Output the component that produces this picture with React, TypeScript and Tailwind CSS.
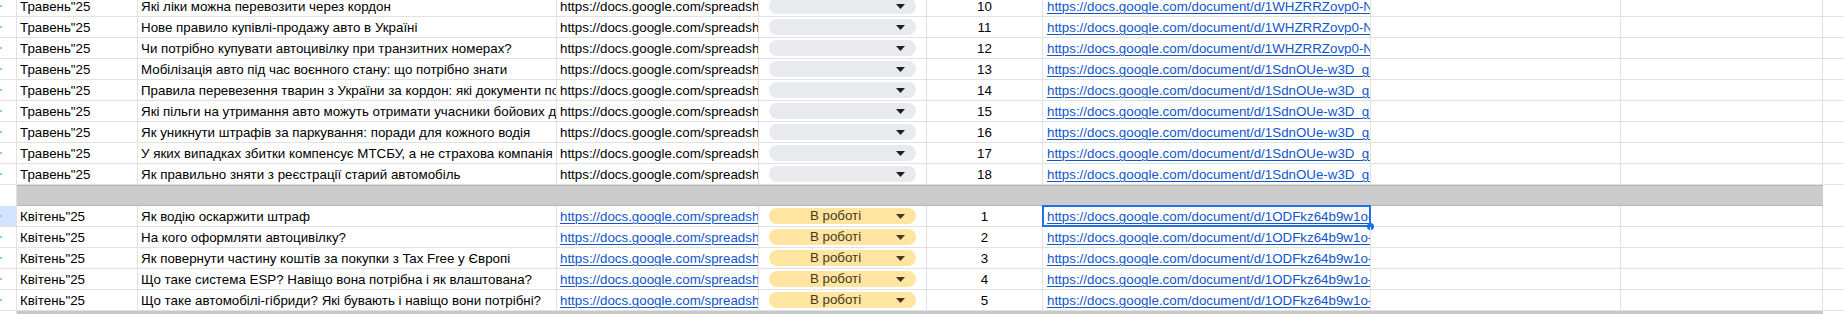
import React from 'react'

type Row = {
  month: string
  title: string
  num: number
  doc: string
  status?: string
}

const may: Row[] = [
  { month: 'Травень"25', title: 'Які ліки можна перевозити через кордон', num: 10, doc: '1WHZRRZovp0-NqK' },
  { month: 'Травень"25', title: 'Нове правило купівлі-продажу авто в Україні', num: 11, doc: '1WHZRRZovp0-NqK' },
  { month: 'Травень"25', title: 'Чи потрібно купувати автоцивілку при транзитних номерах?', num: 12, doc: '1WHZRRZovp0-NqK' },
  { month: 'Травень"25', title: 'Мобілізація авто під час воєнного стану: що потрібно знати', num: 13, doc: '1SdnOUe-w3D_g-Xq' },
  { month: 'Травень"25', title: 'Правила перевезення тварин з України за кордон: які документи потрібні', num: 14, doc: '1SdnOUe-w3D_g-Xq' },
  { month: 'Травень"25', title: 'Які пільги на утримання авто можуть отримати учасники бойових дій', num: 15, doc: '1SdnOUe-w3D_g-Xq' },
  { month: 'Травень"25', title: 'Як уникнути штрафів за паркування: поради для кожного водія', num: 16, doc: '1SdnOUe-w3D_g-Xq' },
  { month: 'Травень"25', title: 'У яких випадках збитки компенсує МТСБУ, а не страхова компанія', num: 17, doc: '1SdnOUe-w3D_g-Xq' },
  { month: 'Травень"25', title: 'Як правильно зняти з реєстрації старий автомобіль', num: 18, doc: '1SdnOUe-w3D_g-Xq' },
]

const april: Row[] = [
  { month: 'Квітень"25', title: 'Як водію оскаржити штраф', num: 1, doc: '1ODFkz64b9w1o-Ab', status: 'В роботі' },
  { month: 'Квітень"25', title: 'На кого оформляти автоцивілку?', num: 2, doc: '1ODFkz64b9w1o-Ab', status: 'В роботі' },
  { month: 'Квітень"25', title: 'Як повернути частину коштів за покупки з Tax Free у Європі', num: 3, doc: '1ODFkz64b9w1o-Ab', status: 'В роботі' },
  { month: 'Квітень"25', title: 'Що таке система ESP? Навіщо вона потрібна і як влаштована?', num: 4, doc: '1ODFkz64b9w1o-Ab', status: 'В роботі' },
  { month: 'Квітень"25', title: 'Що таке автомобілі-гібриди? Які бувають і навіщо вони потрібні?', num: 5, doc: '1ODFkz64b9w1o-Ab', status: 'В роботі' },
]

const cell = 'h-[20px] leading-[21px] overflow-hidden whitespace-nowrap border-r border-[#e2e2e2] shrink-0'

function Arrow({ color }: { color: string }) {
  return (
    <svg width="9" height="5" viewBox="0 0 9 5" className="shrink-0">
      <polygon points="0,0 9,0 4.5,5" fill={color} />
    </svg>
  )
}

function StatusChip({ status }: { status?: string }) {
  if (!status) {
    return (
      <div className="mx-[10px] h-[16px] rounded-full bg-[#e8eaed] flex items-center justify-end pr-[11px]">
        <Arrow color="#1f1f1f" />
      </div>
    )
  }
  return (
    <div className="mx-[10px] h-[16px] rounded-full bg-[#ffe5a0] flex items-center pr-[11px]">
      <span className="flex-1 text-center leading-[16px] text-[#473821] pl-[6px]">{status}</span>
      <Arrow color="#473821" />
    </div>
  )
}

function SheetRow({ row, linked, selected }: { row: Row; linked: boolean; selected?: boolean }) {
  const link = 'text-[#1155cc] underline decoration-[1px] underline-offset-[2px]'
  return (
    <div className="flex border-b border-[#e2e2e2] bg-white">
      <div className={`${cell} w-[17px] relative ${selected ? 'bg-[#d3e3fd]' : ''}`}>
        <span className="absolute left-0 top-[9px] w-[2px] h-[2px] bg-[#7fd0f0]" />
      </div>
      <div className={`${cell} w-[121px] pl-[3px]`}>{row.month}</div>
      <div className={`${cell} w-[419px] pl-[3px]`}>{row.title}</div>
      <div className={`${cell} w-[202px] pl-[3px]`}>
        <span className={linked ? link : ''}>https://docs.google.com/spreadsheets/d/1xQ</span>
      </div>
      <div className={`${cell} w-[168px] flex items-center`}>
        <div className="w-full">
          <StatusChip status={row.status} />
        </div>
      </div>
      <div className={`${cell} w-[116px] text-center`}>{row.num}</div>
      <div className={`${cell} w-[328px] pl-[4px] relative !overflow-visible`}>
        <div className="overflow-hidden h-[20px]">
          <span className={link}>https://docs.google.com/document/d/{row.doc}</span>
        </div>
        {selected && (
          <>
            <div className="absolute -left-[1px] -top-[1px] -right-[1px] -bottom-[1px] border-2 border-[#1a73e8] pointer-events-none" />
            <div className="absolute -right-[4px] -bottom-[4px] w-[7px] h-[7px] rounded-full bg-[#1a73e8]" />
          </>
        )}
      </div>
      <div className={`${cell} w-[250px]`} />
      <div className={`${cell} w-[202px]`} />
      <div className="flex-1 h-[20px]" />
    </div>
  )
}

export default function App() {
  return (
    <div className="w-[1844px] h-[314px] overflow-hidden bg-white text-black text-[13.333px] font-['Liberation_Sans',Arial,sans-serif]">
      <div className="-mt-[4px]">
        {may.map((r) => (
          <SheetRow key={r.num} row={r} linked={false} />
        ))}

        {/* group separator */}
        <div className="flex h-[21px]">
          <div className="w-[17px] shrink-0 border-r border-[#e2e2e2] bg-white" />
          <div className="w-[1806px] shrink-0 bg-[#cccccc] border-y border-[#b5b5b5]" />
          <div className="flex-1" />
        </div>

        {april.map((r, i) => (
          <SheetRow key={r.num} row={r} linked selected={i === 0} />
        ))}

        <div className="flex h-[4px]">
          <div className="w-[17px] shrink-0 border-r border-[#e2e2e2]" />
          <div className="w-[1806px] shrink-0 bg-[#c7c7c7]" />
          <div className="flex-1" />
        </div>
      </div>
    </div>
  )
}
